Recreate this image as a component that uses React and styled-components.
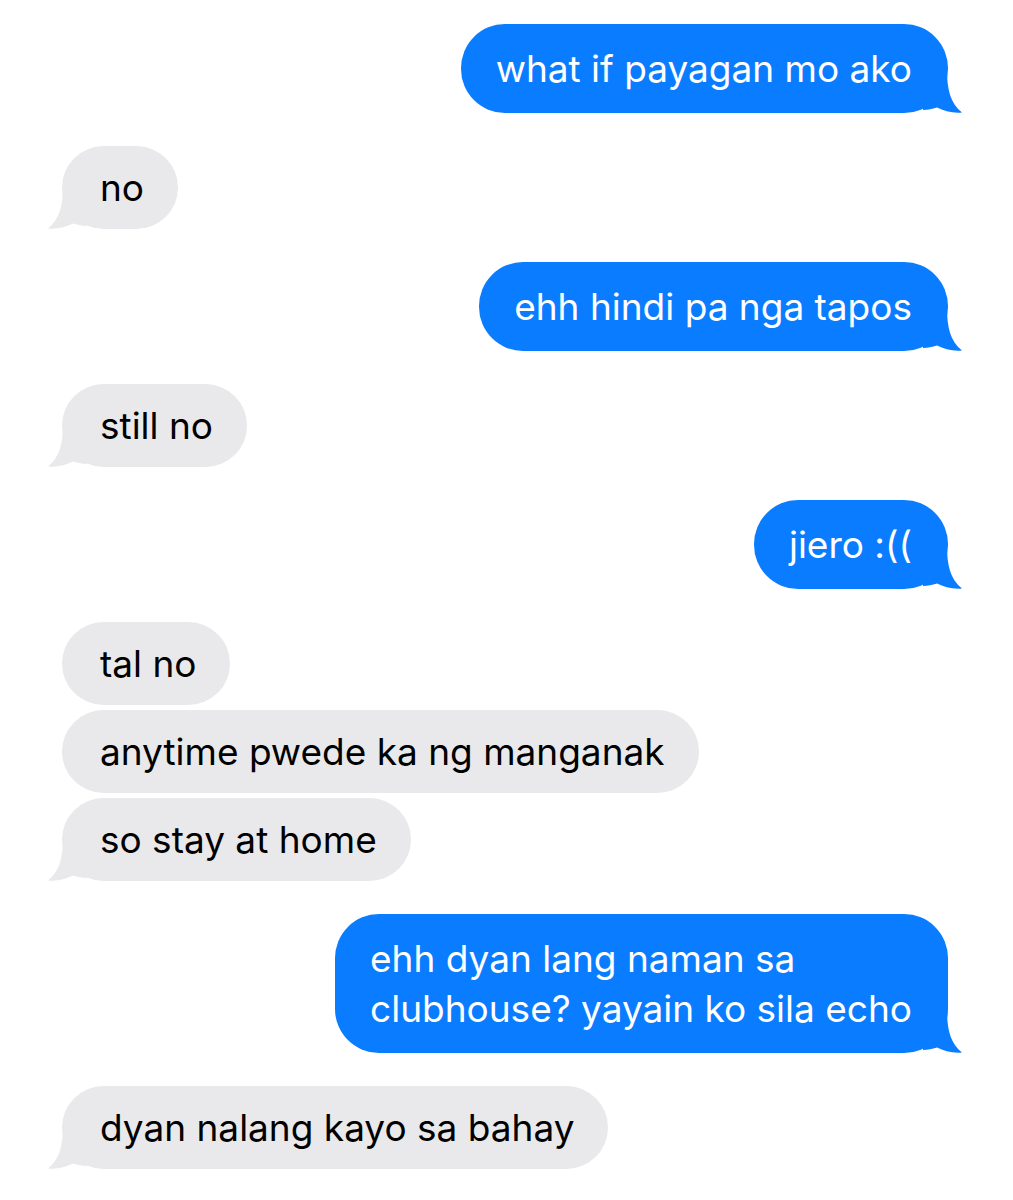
import React from "react";
import styled, { createGlobalStyle } from "styled-components";

const GlobalStyle = createGlobalStyle`
  body {
    margin: 0;
    background: #ffffff;
    font-family: Inter, "Noto Sans", "Liberation Sans", sans-serif;
  }
`;

// each bubble is a list of its text lines (the reference wraps the long one at "sa")
const messages = [
  { from: "me", bubbles: [["what if payagan mo ako"]] },
  { from: "them", bubbles: [["no"]] },
  { from: "me", bubbles: [["ehh hindi pa nga tapos"]] },
  { from: "them", bubbles: [["still no"]] },
  { from: "me", bubbles: [["jiero :(("]] },
  { from: "them", bubbles: [["tal no"], ["anytime pwede ka ng manganak"], ["so stay at home"]] },
  { from: "me", bubbles: [["ehh dyan lang naman sa", "clubhouse? yayain ko sila echo"]] },
  { from: "them", bubbles: [["dyan nalang kayo sa bahay"]] },
];

function Tail({ from }) {
  return (
    <TailShape $from={from} viewBox="0 0 40 44" width="40" height="44">
      <path d="M0 0 L24 0 C24 20 27 34 39 43.5 C30 44.5 21 42 14 38.5 C9 40 5 41 0 41 Z" />
    </TailShape>
  );
}

function App() {
  return (
    <>
      <GlobalStyle />
      <Thread>
        {messages.map((group, i) => (
          <Group key={i} $from={group.from}>
            {group.bubbles.map((lines, j) => (
              <Bubble key={j} $from={group.from}>
                {lines.map((line, k) => (
                  <Line key={k}>{line}</Line>
                ))}
                {j === group.bubbles.length - 1 && <Tail from={group.from} />}
              </Bubble>
            ))}
          </Group>
        ))}
      </Thread>
    </>
  );
}

export default App;

const Thread = styled.div`
  display: flex;
  flex-direction: column;
  gap: 33px;
  padding: 24px 65px 30px 62px;
`;

const Group = styled.div`
  display: flex;
  flex-direction: column;
  gap: 5px;
  align-items: ${(p) => (p.$from === "me" ? "flex-end" : "flex-start")};
`;

const Bubble = styled.div`
  position: relative;
  box-sizing: border-box;
  white-space: nowrap;
  padding: ${(p) => (p.$from === "me" ? "19.5px 36px 19.5px 35px" : "16.5px 34px 16.5px 38px")};
  border-radius: 44px;
  background: ${(p) => (p.$from === "me" ? "#0a7cff" : "#e9e9eb")};
  color: ${(p) => (p.$from === "me" ? "#ffffff" : "#000000")};
  font-size: 37px;
  line-height: 50px;
`;

const Line = styled.div``;

const TailShape = styled.svg`
  position: absolute;
  bottom: 0;
  ${(p) => (p.$from === "me" ? "right: -15px;" : "left: -15px; transform: scaleX(-1);")}
  fill: ${(p) => (p.$from === "me" ? "#0a7cff" : "#e9e9eb")};
`;
